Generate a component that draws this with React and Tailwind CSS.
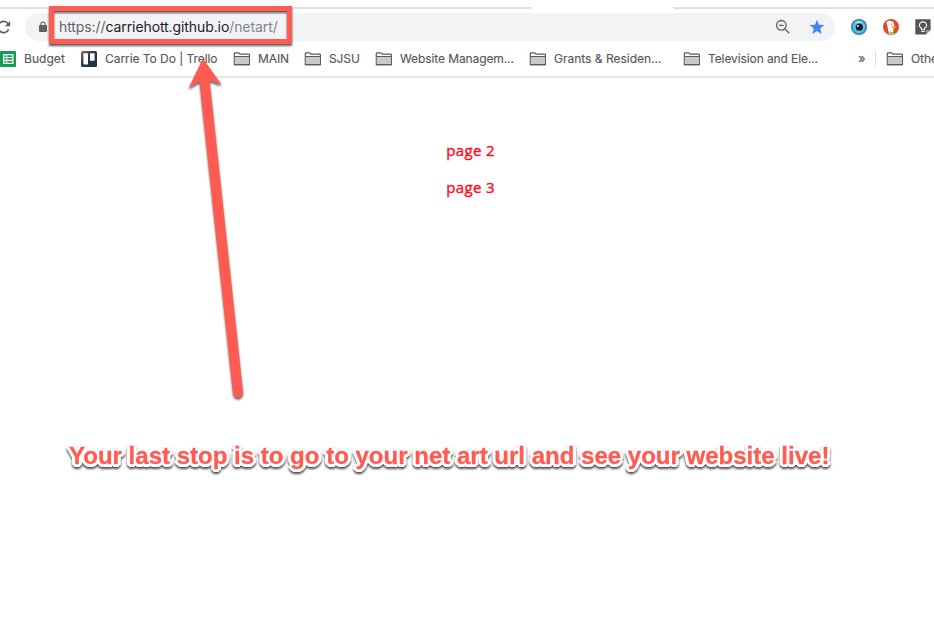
const Folder = () => (
  <svg className="h-[14px] w-[18px] shrink-0" viewBox="0 0 18 14" fill="none" stroke="#5b5b5d" strokeWidth="1.2">
    <path d="M1.3 12.6V1.4Q1.3.8 2 .8H5.6Q6.2.8 6.6 1.5L7 2.2H15.6Q16.4 2.2 16.4 3V12.6Z" fill="#fff" />
    <path d="M1.8 4.8H16V12.2H1.8Z" fill="#c9c9ca" stroke="none" />
    <path d="M1.3 4.5H16.4M1.3 12.6H16.4" />
  </svg>
);

const Sheet = () => (
  <svg className="h-4 w-4 shrink-0" viewBox="0 0 16 16">
    <rect width="16" height="16" rx="1.3" fill="#169b54" />
    <path d="M3 3H13.5V13H3Z" fill="#fff" />
    <path d="M4.3 4.2h2v1.7h-2zM7.3 4.2h5v1.7h-5zM4.3 7.1h2v1.7h-2zM7.3 7.1h5v1.7h-5zM4.3 10h2v1.7h-2zM7.3 10h5v1.7h-5z" fill="#169b54" />
  </svg>
);

const Trello = () => (
  <svg className="h-4 w-4 shrink-0" viewBox="0 0 16 16">
    <defs>
      <linearGradient id="board" x1="0" y1="0" x2="1" y2="1">
        <stop offset="0" stopColor="#a56d55" />
        <stop offset=".4" stopColor="#293a4b" />
        <stop offset="1" stopColor="#1c2e40" />
      </linearGradient>
    </defs>
    <rect width="16" height="16" rx="1.5" fill="url(#board)" />
    <rect x="2.4" y="2.2" width="4.6" height="11.2" rx=".6" fill="#fff" />
    <rect x="9" y="2.2" width="4.6" height="7.6" rx=".6" fill="#fff" />
  </svg>
);

const bookmarks = [
  { label: "Budget", icon: Sheet, cell: "w-[81px]", text: "ml-2 tracking-[0.05px]" },
  { label: "Carrie To Do | Trello", icon: Trello, cell: "w-[152px]", text: "ml-2 tracking-[-0.05px]" },
  { label: "MAIN", icon: Folder, cell: "w-[71px]", text: "ml-[7px]" },
  { label: "SJSU", icon: Folder, cell: "w-[71px]", text: "ml-[7px]" },
  { label: "Website Managem...", icon: Folder, cell: "w-[154px]", text: "ml-[7px]" },
  { label: "Grants & Residen...", icon: Folder, cell: "w-[154px]", text: "ml-[7px] tracking-[0px]" },
  { label: "Television and Ele...", icon: Folder, cell: "w-[174px]", text: "ml-[7px]" },
];

export default function App() {
  return (
    <div className="relative h-[624px] w-[934px] overflow-hidden bg-white font-['Inter',sans-serif]">
      <header className="h-[78px] border-b-2 border-[#e6e7e8]">
        <div className="flex h-[9px] items-end justify-between">
          <div className="h-[2px] w-[532px] rounded-br-full bg-[#dce1e7]" />
          <div className="h-[2px] w-[261px] rounded-bl-full bg-[#dce1e7]" />
        </div>
        <div className="mt-1 flex h-7 items-center">
          <svg className="h-7 w-[25px] shrink-0" viewBox="0 0 25 28" fill="none" stroke="#5b5e62" strokeWidth="1.7">
            <path d="M8.5 11.3A5.6 5.6 0 1 0 8.7 16.4" />
            <path d="M10.2 8V13.3H4.9Z" fill="#5b5e62" stroke="none" />
          </svg>
          <div className="flex h-7 w-[810px] shrink-0 items-center rounded-full bg-[#f1f3f4]">
            <svg className="ml-[14px] h-3 w-2 shrink-0" viewBox="0 0 8 12">
              <path d="M1.9 5V3.1a2.1 2.1 0 0 1 4.2 0V5" fill="none" stroke="#5f6368" strokeWidth="1.1" />
              <rect y="4.1" width="8" height="6.8" rx=".8" fill="#5f6368" />
            </svg>
            <div className="ml-3 w-[716px] whitespace-nowrap text-[14px] leading-5 tracking-[-0.09px] text-[#5f6368]">
              https://<span className="text-[#202124]">carriehott.github.io</span><span className="text-[#80868b]">/netart/</span>
            </div>
            <svg className="h-4 w-4 shrink-0" viewBox="0 0 16 16" fill="none" stroke="#5f6368" strokeWidth="1.3">
              <circle cx="6.3" cy="6.3" r="4.8" />
              <path d="M4 6.3h4.6M9.8 9.8l4.4 4.4" />
            </svg>
            <svg className="ml-[18px] h-4 w-4 shrink-0" viewBox="0 0 16 16">
              <path d="M8 .7l2 5 5.3.4-4.1 3.5 1.3 5.3L8 12.1l-4.5 2.8 1.3-5.3L.7 6.1l5.3-.4Z" fill="#4285f4" />
            </svg>
          </div>
          <svg className="ml-4 h-4 w-4 shrink-0" viewBox="0 0 16 16">
            <defs>
              <radialGradient id="iris">
                <stop offset="0" stopColor="#8bdcf5" />
                <stop offset=".7" stopColor="#4fbde0" />
                <stop offset="1" stopColor="#2b6a84" />
              </radialGradient>
            </defs>
            <circle cx="8" cy="8" r="8" fill="url(#iris)" />
            <circle cx="8.3" cy="8.2" r="3.6" fill="#111f2c" />
            <circle cx="6.9" cy="7" r="1.2" fill="#9fbdca" />
            <path d="M3.2 4.6Q7.5.2 12.3 3.8Q7 2.8 3.2 4.6Z" fill="#d9f4fb" />
          </svg>
          <svg className="ml-4 h-4 w-4 shrink-0" viewBox="0 0 16 16">
            <circle cx="8" cy="8" r="8" fill="#dc4b31" />
            <path d="M6.1 15L4.3 7C3.5 5.3 3 3.1 4.6 2.1C7.7 1 11 2.3 11.3 5.5l-1.1 4 .7 5.2c-1.6.8-3.3.8-4.8.3Z" fill="#fff" />
            <path d="M8.6 7.3c1.9-.7 3.8-.4 5 .4-1 .8-2.3.8-3.2 1.2l2 .7c-1.7.9-3.6.2-3.8-2.3Z" fill="#fdb813" />
            <path d="M6.6 12.3l2 .9 2.5-1.1.2 2.6-2.5-.5-2 .9Z" fill="#65bc46" />
            <circle cx="8.8" cy="5.1" r=".6" fill="#31547a" />
          </svg>
          <svg className="ml-4 h-4 w-4 shrink-0" viewBox="0 0 16 16">
            <path d="M1 .2H15Q15.6.2 15.6 1V11L11 15.6H1Q.3 15.6.3 15V1Q.3.2 1 .2Z" fill="#555" />
            <path d="M11 11h4.6L11 15.6Z" fill="#999" />
            <path d="M6.5 9.3C5.4 8.6 4.4 7.7 4.4 6.5a3.6 3.6 0 0 1 7.2 0c0 1.2-1 2.1-2.1 2.8v1.5h-3Z" fill="none" stroke="#fff" strokeWidth="1.1" />
            <path d="M6.4 12.5h3.2" stroke="#fff" />
          </svg>
        </div>
        <nav className="flex h-[35px] items-center whitespace-nowrap text-[12px] tracking-[-0.1px] text-[#55585c] [-webkit-text-stroke:0.15px_#55585c]">
          {bookmarks.map(({ label, icon: Icon, cell, text }) => (
            <div key={label} className={`flex shrink-0 items-center ${cell}`}>
              <Icon />
              <span className={text}>{label}</span>
            </div>
          ))}
          <span className="w-[18px] shrink-0 pl-px text-[13px]">»</span>
          <i className="h-4 w-px shrink-0 bg-[#dedfe0]" />
          <div className="ml-[10px] flex shrink-0 items-center">
            <Folder />
            <span className="ml-[7px]">Othe</span>
          </div>
        </nav>
      </header>
      <main className="flex flex-col items-center gap-[13px] pt-[60px] pl-[7px] font-['Open_Sans',sans-serif] text-[15px] font-medium leading-6 tracking-[0.35px] text-[#ff0b22] [-webkit-text-stroke:0.4px_#ff0b22]">
        <p>page 2</p>
        <p>page 3</p>
      </main>
      <div className="absolute left-[49px] top-[6px] h-[38px] w-[243px] border-[5px] border-[#ff5b52] drop-shadow-[0_2px_1px_rgba(0,0,0,0.65)]" />
      <svg className="absolute left-[180px] top-[50px] h-[360px] w-[70px] drop-shadow-[0_2px_1px_rgba(0,0,0,0.6)]" viewBox="0 0 70 360" fill="#ff5b52">
        <path d="M23 8.5L41.7 34.7L29.6 30.5L63 342A5 5 0 0 1 53 343.3L19.5 31.5L8.5 38.3Z" />
      </svg>
      <p className="absolute left-[69px] top-[442px] whitespace-nowrap font-['Liberation_Sans',sans-serif] text-[24px] font-bold leading-7 tracking-[0.01px] text-[#ff5b52] drop-shadow-[0_2px_1px_rgba(0,0,0,0.7)] [-webkit-text-stroke:0.3px_#ff5b52] [text-shadow:3px_0_white,-3px_0_white,0_3px_white,0_-3px_white,2px_2px_white,-2px_2px_white,2px_-2px_white,-2px_-2px_white,1px_3px_white,-1px_3px_white,3px_1px_white,-3px_1px_white]">
        Your last stop is to go to your net art url and see your website live!
      </p>
    </div>
  );
}
